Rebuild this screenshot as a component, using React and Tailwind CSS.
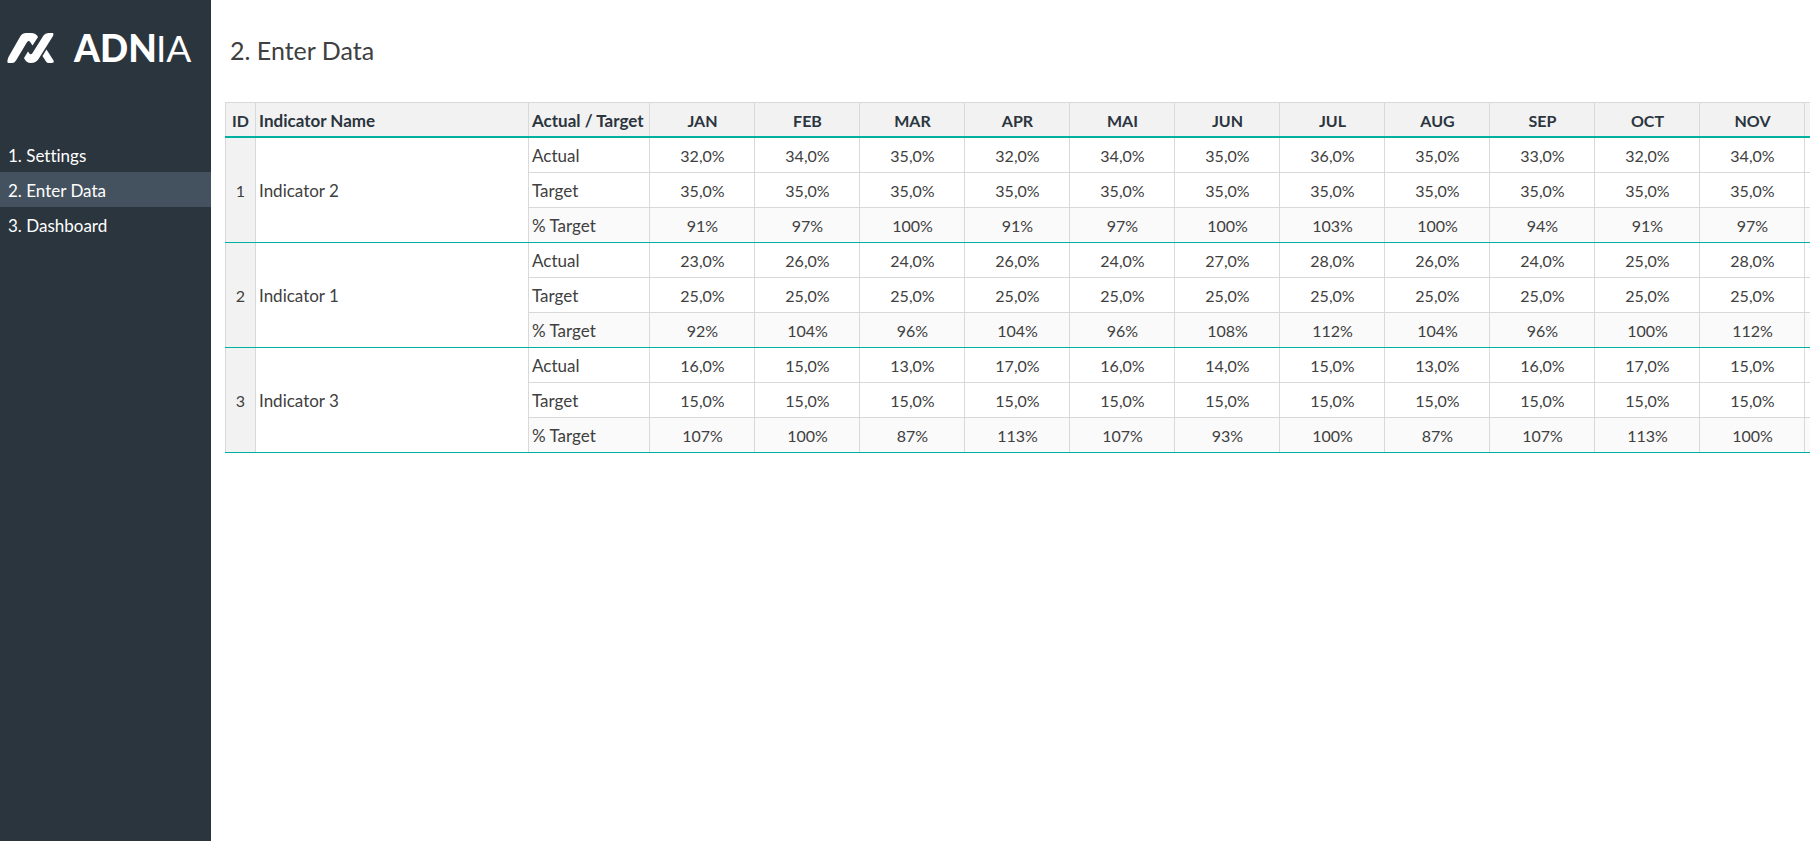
import React, { useState } from 'react';

const pages = ['1. Settings', '2. Enter Data', '3. Dashboard'];

const months = ['JAN', 'FEB', 'MAR', 'APR', 'MAI', 'JUN', 'JUL', 'AUG', 'SEP', 'OCT', 'NOV'];

const indicators = [
  { id: 1, name: 'Indicator 2', target: 35, actual: [32, 34, 35, 32, 34, 35, 36, 35, 33, 32, 34] },
  { id: 2, name: 'Indicator 1', target: 25, actual: [23, 26, 24, 26, 24, 27, 28, 26, 24, 25, 28] },
  { id: 3, name: 'Indicator 3', target: 15, actual: [16, 15, 13, 17, 16, 14, 15, 13, 16, 17, 15] },
];

// vertical rules are inset shadows so the teal row lines run through unbroken
const headCell = 'border-t border-b-2 border-t-[#d9d9d9] border-b-[#00b0a0] pt-0.5 shadow-[inset_-1px_0_#d9d9d9]';
const cell = 'border-b border-[#d9d9d9] pt-0.5 shadow-[inset_-1px_0_#d9d9d9]';
const lastCell = 'border-b border-[#00b0a0] pt-0.5 shadow-[inset_-1px_0_#d9d9d9]';
const label = 'px-[3px] text-left text-[17px]';

const formatValue = (value) => `${value.toFixed(1).replace('.', ',')}%`;

function Logo() {
  return (
    <svg viewBox="0 -10 200 56" className="h-14 w-[200px]" role="img" aria-label="ADNIA" fill="#fff">
      <path d="M8 33 L12 33 Q14.5 33 16 30.500 L26.500 13 Q28.500 9.500 30.500 12.500 L32.500 15.500 L38 7 Q36 3 31 3 L26 3 Q22.500 3 20.500 6 L8.500 27 Q6.500 32 8 33 Z" />
      <path d="M24 28 L28 21.500 Q30.500 26 32.500 23 L43.500 5.500 Q45 3 48.500 3 L53 3 Q54 4 53 6 L38.500 29 Q36 33 31 33 Q26 33 24 28 Z" />
      <path d="M42.500 26 L46.500 19.500 L53.500 30.500 Q54.500 33 51.500 33 L49 33 Q47 33 46 31.500 Z" />
      <text x="74" y="32" fontSize="37" fontWeight="900">
        ADN
      </text>
      <text x="156" y="32" fontSize="37" fontWeight="400">
        IA
      </text>
    </svg>
  );
}

export default function App() {
  const [activePage, setActivePage] = useState('2. Enter Data');

  return (
    <div className="flex min-h-screen bg-white font-['Lato',sans-serif] text-[16px] leading-5 text-[#404040] [font-variant-ligatures:none]">
      <aside className="w-[211px] shrink-0 bg-[#2b353e] text-white">
        <div className="h-[137px] pt-5">
          <Logo />
        </div>
        <nav className="text-[17px]">
          {pages.map((page) => (
            <a
              key={page}
              href="#"
              onClick={() => setActivePage(page)}
              className={`flex h-[35px] items-center px-2 pt-0.5 ${page === activePage ? 'bg-[#44525f]' : ''}`}
            >
              {page}
            </a>
          ))}
        </nav>
      </aside>

      <main className="min-w-0 flex-1 overflow-hidden pl-[14px]">
        <h1 className="flex h-[102px] items-center pb-0.5 pl-[5px] text-[25px]">2. Enter Data</h1>

        <table className="w-full min-w-[1580px] table-fixed border-separate border-spacing-0 text-center">
          <colgroup>
            <col className="w-[31px]" />
            <col className="w-[273px]" />
            <col className="w-[121px]" />
            {months.map((month) => (
              <col key={month} className="w-[105px]" />
            ))}
            <col />
          </colgroup>
          <thead>
            <tr className="h-9 bg-[#f2f2f2] text-[#2b353e]">
              <th className="border-t border-b-2 border-t-[#d9d9d9] border-b-[#00b0a0] pt-0.5 shadow-[inset_1px_0_#d9d9d9,inset_-1px_0_#d9d9d9]">
                ID
              </th>
              <th className={`${headCell} ${label}`}>Indicator Name</th>
              <th className={`${headCell} ${label} whitespace-nowrap`}>Actual / Target</th>
              {months.map((month) => (
                <th key={month} className={headCell}>
                  {month}
                </th>
              ))}
              <td className="border-t border-b-2 border-t-[#d9d9d9] border-b-[#00b0a0]" />
            </tr>
          </thead>
          {indicators.map((item) => (
            <tbody key={item.id}>
              <tr className="h-[35px]">
                <td
                  rowSpan={3}
                  className="border-b border-[#00b0a0] bg-[#f2f2f2] pt-0.5 shadow-[inset_1px_0_#d9d9d9,inset_-1px_0_#d9d9d9]"
                >
                  {item.id}
                </td>
                <td rowSpan={3} className={`${lastCell} ${label}`}>
                  {item.name}
                </td>
                <td className={`${cell} ${label}`}>Actual</td>
                {item.actual.map((value, i) => (
                  <td key={months[i]} className={cell}>
                    {formatValue(value)}
                  </td>
                ))}
                <td className="border-b border-[#d9d9d9]" />
              </tr>
              <tr className="h-[35px]">
                <td className={`${cell} ${label}`}>Target</td>
                {months.map((month) => (
                  <td key={month} className={cell}>
                    {formatValue(item.target)}
                  </td>
                ))}
                <td className="border-b border-[#d9d9d9]" />
              </tr>
              <tr className="h-[35px] bg-[#fafafa]">
                <td className={`${lastCell} ${label}`}>% Target</td>
                {item.actual.map((value, i) => (
                  <td key={months[i]} className={lastCell}>
                    {Math.round((value / item.target) * 100)}%
                  </td>
                ))}
                <td className="border-b border-[#00b0a0]" />
              </tr>
            </tbody>
          ))}
        </table>
      </main>
    </div>
  );
}
